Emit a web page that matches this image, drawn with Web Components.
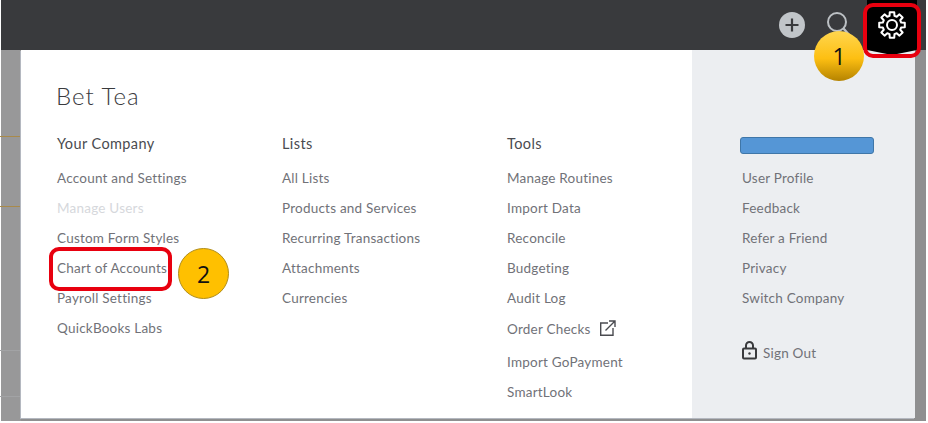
<!DOCTYPE html>
<html>
<head>
<meta charset="utf-8">
<title>Bet Tea settings menu</title>
<style>
  html, body { margin: 0; padding: 0; background: #fff; }
  body { width: 928px; height: 423px; overflow: hidden; font-family: Lato, "Open Sans", sans-serif; }
</style>
</head>
<body>
<template id="tpl-link">
  <style>
    :host { display: flex; align-items: center; height: 30px; font-size: 13.5px; letter-spacing: .22px; color: #717278; white-space: nowrap; }
    :host([disabled]) { color: #d6d8dc; }
    :host([tall]) { height: 31px; padding-bottom: 3px; }
  </style>
  <slot></slot>
</template>

<template id="tpl-column">
  <style>
    :host { display: block; flex: none; width: 225px; }
    h3 { margin: 0 0 4px; height: 30px; line-height: 30px; font-size: 14.5px; font-weight: 400; letter-spacing: .4px; color: #4a4b50; }
  </style>
  <h3></h3>
  <slot></slot>
</template>

<template id="tpl-topbar">
  <style>
    :host { display: flex; justify-content: flex-end; align-items: flex-start; height: 50px; margin-left: 1px; background: #393a3d; }
    .btn { display: flex; align-items: center; justify-content: center; height: 50px; }
    .plus { width: 28px; margin-right: 19px; }
    .search { width: 28px; margin-right: 14px; }
    .gear { position: relative; width: 50px; margin-right: 9px; background: #000; }
    .gear::after { content: ""; position: absolute; left: 0; right: 0; top: 50px; height: 5px; background: #000; clip-path: polygon(0 0, 100% 0, 50% 100%); }
    .gear svg { position: relative; }
  </style>
  <div class="btn plus">
    <svg width="26" height="26" viewBox="0 0 26 26"><circle cx="13" cy="13" r="13" fill="#c1c5c9"/><path d="M13 6.500v13M6.500 13h13" stroke="#393a3d" stroke-width="2.200" fill="none"/></svg>
  </div>
  <div class="btn search">
    <svg width="28" height="30" viewBox="0 0 28 30"><circle cx="12" cy="12" r="9" fill="none" stroke="#bcc0c4" stroke-width="2"/><path d="M18.500 18.500l7.500 8.500" stroke="#bcc0c4" stroke-width="2.400" fill="none"/></svg>
  </div>
  <div class="btn gear">
    <svg width="30" height="30" viewBox="-15 -15 30 30" fill="none" stroke="#fff" stroke-width="2" stroke-linejoin="round">
      <circle r="5"/>
      <path class="cog"/>
    </svg>
  </div>
</template>

<template id="tpl-panel">
  <style>
    :host { display: grid; grid-template-columns: 671px 223px; width: 894px; height: 368px; margin-left: 21px; background: #fff; overflow: hidden; box-shadow: -1px 1px 0 #b4b8c0; }
    .main { padding: 28px 0 0 36px; }
    h2 { margin: 0 0 16px -1px; height: 35px; line-height: 35px; font-size: 24px; font-weight: 300; letter-spacing: 1px; color: #393a3d; }
    .cols { display: flex; }
    .side { background: #eceef1; padding: 87px 0 0 50px; }
  </style>
  <div class="main">
    <h2></h2>
    <div class="cols"><slot></slot></div>
  </div>
  <div class="side"><slot name="side"></slot></div>
</template>

<template id="tpl-callout">
  <style>
    :host { position: absolute; display: flex; align-items: center; justify-content: center; width: 51px; height: 51px; border-radius: 50%; box-sizing: border-box; font-family: "Open Sans", sans-serif; font-size: 23px; color: #111; background: #ffc000; border: 1px solid #b08d1a; }
    :host([shaded]) { width: 50px; height: 50px; border: 0; background: linear-gradient(#ffd64f, #fdbf12 55%, #b58300); }
  </style>
  <slot></slot>
</template>

<template id="tpl-highlight">
  <style>
    :host { position: absolute; box-sizing: border-box; border: 4px solid #e8000f; border-radius: 10px; }
  </style>
</template>

<qb-app>
  <qb-topbar></qb-topbar>
  <qb-panel company="Bet Tea">
    <qb-column heading="Your Company">
      <qb-link>Account and Settings</qb-link>
      <qb-link disabled>Manage Users</qb-link>
      <qb-link>Custom Form Styles</qb-link>
      <qb-link>Chart of Accounts</qb-link>
      <qb-link>Payroll Settings</qb-link>
      <qb-link>QuickBooks Labs</qb-link>
    </qb-column>
    <qb-column heading="Lists">
      <qb-link>All Lists</qb-link>
      <qb-link>Products and Services</qb-link>
      <qb-link>Recurring Transactions</qb-link>
      <qb-link>Attachments</qb-link>
      <qb-link>Currencies</qb-link>
    </qb-column>
    <qb-column heading="Tools">
      <qb-link>Manage Routines</qb-link>
      <qb-link>Import Data</qb-link>
      <qb-link>Reconcile</qb-link>
      <qb-link>Budgeting</qb-link>
      <qb-link>Audit Log</qb-link>
      <qb-link tall>Order Checks
        <svg style="margin-left:8px" width="17" height="17" viewBox="0 0 17 17" fill="none" stroke="#4a4b50" stroke-width="1.400"><path d="M9 3H1.700v12.300H14V8"/><path d="M6.500 10.500L15.500 1.500M10 1h6v6"/></svg>
      </qb-link>
      <qb-link>Import GoPayment</qb-link>
      <qb-link>SmartLook</qb-link>
    </qb-column>
    <qb-side-menu slot="side"></qb-side-menu>
  </qb-panel>
  <qb-highlight style="left:863px;top:3px;width:58px;height:55px"></qb-highlight>
  <qb-highlight style="left:49px;top:247px;width:123px;height:44px"></qb-highlight>
  <qb-callout shaded style="left:814px;top:31px">1</qb-callout>
  <qb-callout style="left:178px;top:248px">2</qb-callout>
</qb-app>

<script>
  function fromTemplate(el, id) {
    const shadow = el.attachShadow({ mode: 'open' });
    shadow.appendChild(document.getElementById(id).content.cloneNode(true));
    return shadow;
  }

  // eight blocky teeth, angles in degrees
  function cogPath(outer, root) {
    const pt = (r, deg) => {
      const a = deg * Math.PI / 180;
      return (r * Math.cos(a)).toFixed(2) + ' ' + (r * Math.sin(a)).toFixed(2);
    };
    let d = '';
    for (let i = 0; i < 8; i++) {
      const a = i * 45;
      d += (i ? 'L' : 'M') + pt(root, a - 15);
      d += 'L' + pt(outer, a - 10) + 'L' + pt(outer, a + 10) + 'L' + pt(root, a + 15);
    }
    return d + 'Z';
  }

  class QbApp extends HTMLElement {
    constructor() {
      super();
      const shadow = this.attachShadow({ mode: 'open' });
      shadow.innerHTML = `
        <style>
          :host {
            display: block; position: relative; width: 926px; height: 421px; overflow: hidden;
            background:
              linear-gradient(#a98a4a, #a98a4a) 0 136px / 21px 1px no-repeat,
              linear-gradient(#a98a4a, #a98a4a) 0 206px / 21px 1px no-repeat,
              linear-gradient(#a2a3a5, #a2a3a5) 0 350px / 21px 1px no-repeat,
              linear-gradient(#a2a3a5, #a2a3a5) 0 396px / 21px 1px no-repeat,
              linear-gradient(#fff, #fff) 0 0 / 1px 100% no-repeat,
              linear-gradient(#989899, #989899) 0 0 / 21px 100% no-repeat,
              #8f8f90;
          }
        </style>
        <slot></slot>`;
    }
  }

  class QbTopbar extends HTMLElement {
    constructor() {
      super();
      const shadow = fromTemplate(this, 'tpl-topbar');
      shadow.querySelector('.cog').setAttribute('d', cogPath(13, 9.5));
    }
  }

  class QbPanel extends HTMLElement {
    constructor() {
      super();
      const shadow = fromTemplate(this, 'tpl-panel');
      shadow.querySelector('h2').textContent = this.getAttribute('company') || '';
    }
  }

  class QbColumn extends HTMLElement {
    constructor() {
      super();
      const shadow = fromTemplate(this, 'tpl-column');
      shadow.querySelector('h3').textContent = this.getAttribute('heading') || '';
    }
  }

  class QbLink extends HTMLElement {
    constructor() { super(); fromTemplate(this, 'tpl-link'); }
  }

  class QbSideMenu extends HTMLElement {
    constructor() {
      super();
      const shadow = this.attachShadow({ mode: 'open' });
      shadow.innerHTML = `
        <style>
          :host { display: block; }
          .bar { width: 134px; height: 17px; box-sizing: border-box; margin: 0 0 9px -2px; background: #5596d6; border: 1px solid #3f76a8; border-radius: 3px; }
          .out { margin-top: 25px; }
          svg { margin-right: 6px; }
        </style>
        <div class="bar"></div>
        <qb-link>User Profile</qb-link>
        <qb-link>Feedback</qb-link>
        <qb-link>Refer a Friend</qb-link>
        <qb-link>Privacy</qb-link>
        <qb-link>Switch Company</qb-link>
        <qb-link class="out">
          <svg style="margin-top:-6px" width="15" height="19" viewBox="0 0 15 19" fill="none" stroke="#393a3d" stroke-width="2"><path d="M4 7V4.500a3.500 3.500 0 0 1 7 0V7"/><rect x="1" y="7.500" width="13" height="10" rx="1"/><circle cx="7.500" cy="12.500" r="1.200" fill="#393a3d" stroke="none"/></svg>
          Sign Out
        </qb-link>`;
    }
  }

  class QbCallout extends HTMLElement {
    constructor() { super(); fromTemplate(this, 'tpl-callout'); }
  }

  class QbHighlight extends HTMLElement {
    constructor() { super(); fromTemplate(this, 'tpl-highlight'); }
  }

  customElements.define('qb-link', QbLink);
  customElements.define('qb-column', QbColumn);
  customElements.define('qb-side-menu', QbSideMenu);
  customElements.define('qb-topbar', QbTopbar);
  customElements.define('qb-panel', QbPanel);
  customElements.define('qb-callout', QbCallout);
  customElements.define('qb-highlight', QbHighlight);
  customElements.define('qb-app', QbApp);
</script>
</body>
</html>
